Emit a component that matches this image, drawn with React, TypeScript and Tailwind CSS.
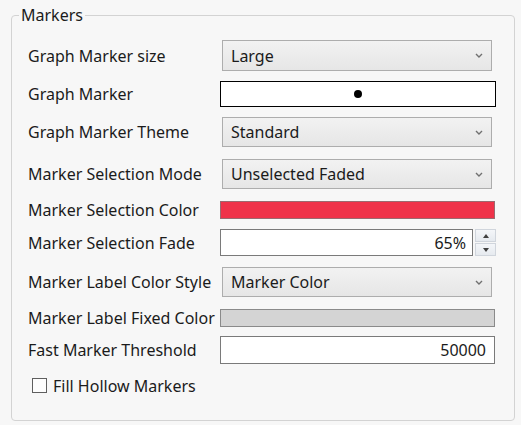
import React from "react";

const font = { fontFamily: '"Noto Sans", "Open Sans", sans-serif' };

function Chevron() {
  return (
    <svg width="8" height="5" viewBox="0 0 8 5" className="mr-[2px] shrink-0">
      <polyline points="1,1 4,4 7,1" fill="none" stroke="#707070" strokeWidth="1.4" />
    </svg>
  );
}

function Select({ value }: { value: string }) {
  return (
    <div className="ml-[2px] flex h-full w-[270px] items-center justify-between border border-[#adadad] bg-gradient-to-b from-[#f2f2f2] to-[#e6e6e6] pl-[8px] pr-[6px] text-[#1b1b1b]">
      <span>{value}</span>
      <Chevron />
    </div>
  );
}

export default function App() {
  return (
    <div className="h-[425px] w-[521px] bg-[#f7f7f7] pl-[11px] pt-[4px] text-[16px] leading-[22px]" style={font}>
      <fieldset className="h-[417px] w-[504px] rounded-[4px] border border-[#d3d3d3] pl-[7px]">
        <legend className="px-[2px] text-[#1b1b1b]">Markers</legend>
        <div className="pl-[9px]">
          <div className="mt-[14px] flex h-[31px] items-center">
            <div className="w-[192px] shrink-0 text-[#1b1b1b]">Graph Marker size</div>
            <div className="flex h-full items-center">
              <Select value="Large" />
            </div>
          </div>
          <div className="mt-[10px] flex h-[26px] items-center">
            <div className="w-[192px] shrink-0 text-[#1b1b1b]">Graph Marker</div>
            <div className="flex h-full w-[276px] items-center justify-center border border-black bg-white">
              <div className="h-[8px] w-[8px] rounded-full bg-black" />
            </div>
          </div>
          <div className="mt-[10px] flex h-[30px] items-center">
            <div className="w-[192px] shrink-0 text-[#1b1b1b]">Graph Marker Theme</div>
            <div className="flex h-full items-center">
              <Select value="Standard" />
            </div>
          </div>
          <div className="mt-[12px] flex h-[30px] items-center">
            <div className="w-[192px] shrink-0 text-[#1b1b1b]">Marker Selection Mode</div>
            <div className="flex h-full items-center">
              <Select value="Unselected Faded" />
            </div>
          </div>
          <div className="mt-[12px] flex h-[18px] items-center">
            <div className="w-[192px] shrink-0 text-[#1b1b1b]">Marker Selection Color</div>
            <div className="h-full w-[275px] border border-[#9a6a70] bg-[#ef3249]" />
          </div>
          <div className="mt-[10px] flex h-[27px] items-center">
            <div className="w-[192px] shrink-0 text-[#1b1b1b]">Marker Selection Fade</div>
            <div className="flex h-full w-[253px] items-center justify-end border border-[#7a7a7a] bg-white pr-[6px] text-[#1b1b1b]">
              65%
            </div>
            <div className="ml-[2px] flex h-full w-[21px] flex-col">
              <div className="flex h-[13px] items-center justify-center border border-[#d0d5dc] bg-gradient-to-b from-[#f4f6f9] to-[#e6eaef]">
                <svg width="6" height="4" viewBox="0 0 6 4"><polygon points="0,4 6,4 3,0" fill="#404040" /></svg>
              </div>
              <div className="mt-[1px] flex h-[13px] items-center justify-center border border-[#d0d5dc] bg-gradient-to-b from-[#f4f6f9] to-[#e6eaef]">
                <svg width="6" height="4" viewBox="0 0 6 4"><polygon points="0,0 6,0 3,4" fill="#404040" /></svg>
              </div>
            </div>
          </div>
          <div className="mt-[11px] flex h-[30px] items-center">
            <div className="w-[192px] shrink-0 text-[#1b1b1b]">Marker Label Color Style</div>
            <div className="flex h-full items-center">
              <Select value="Marker Color" />
            </div>
          </div>
          <div className="mt-[12px] flex h-[18px] items-center">
            <div className="w-[192px] shrink-0 text-[#1b1b1b]">Marker Label Fixed Color</div>
            <div className="h-full w-[275px] border border-[#8a8a8a] bg-[#d4d4d4]" />
          </div>
          <div className="mt-[9px] flex h-[28px] items-center">
            <div className="w-[192px] shrink-0 text-[#1b1b1b]">Fast Marker Threshold</div>
            <div className="flex h-full w-[275px] items-center justify-end border border-[#7a7a7a] bg-white pr-[8px] text-[#1b1b1b]">
              50000
            </div>
          </div>
          <div className="mt-[14px] flex h-[15px] items-center pl-[4px]">
            <div className="h-[15px] w-[15px] border border-[#5f5f5f] bg-[#fdfdfd]" />
            <span className="ml-[6px] text-[#1b1b1b]">Fill Hollow Markers</span>
          </div>
        </div>
      </fieldset>
    </div>
  );
}
